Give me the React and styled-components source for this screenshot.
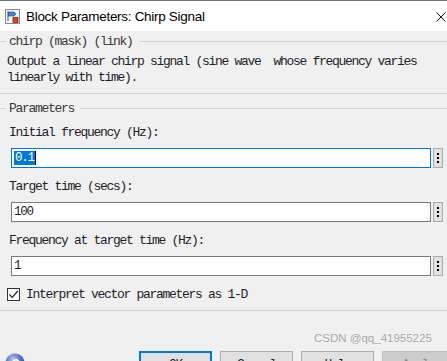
import React from "react";
import styled, { createGlobalStyle } from "styled-components";

const MONO = `"Liberation Mono", "DejaVu Sans Mono", monospace`;
const SANS = `"Liberation Sans", Arial, sans-serif`;

const GlobalStyle = createGlobalStyle`
  html, body {
    margin: 0;
    padding: 0;
    background: #f0f0f0;
    overflow: hidden;
  }
`;

const params = [
  { label: "Initial frequency (Hz):", value: "0.1", focused: true },
  { label: "Target time (secs):", value: "100" },
  { label: "Frequency at target time (Hz):", value: "1" },
];

const buttons = [
  { title: "OK", primary: true },
  { title: "Cancel" },
  { title: "Help" },
  { title: "Apply", disabled: true },
];

const BlockIcon = () => (
  <svg width="15" height="15" viewBox="0 0 15 15">
    <rect x="0.5" y="0.5" width="14" height="14" fill="#f4f4f4" stroke="#8a8a8a" />
    <path d="M3 2.5 V12" stroke="#3a6fb0" strokeWidth="1.2" />
    <path d="M3.5 3 L9 3 L11 5 L9 7 L3.5 7 Z" fill="#4a86d0" stroke="#24508a" strokeWidth="0.7" />
    <rect x="8" y="8.5" width="5" height="5" fill="#e0401c" stroke="#7a1e0a" strokeWidth="0.7" />
  </svg>
);

const CloseIcon = () => (
  <svg width="10" height="10" viewBox="0 0 10 10">
    <path d="M0.5 0.5 L9.5 9.5 M9.5 0.5 L0.5 9.5" stroke="#111" strokeWidth="1" />
  </svg>
);

const HelpGlyph = () => (
  <svg width="22" height="22" viewBox="0 0 22 22">
    <defs>
      <radialGradient id="hg" cx="40%" cy="30%" r="70%">
        <stop offset="0%" stopColor="#b7c9ec" />
        <stop offset="55%" stopColor="#4f72c4" />
        <stop offset="100%" stopColor="#22408e" />
      </radialGradient>
    </defs>
    <circle cx="11" cy="11" r="10.5" fill="#e8e8e8" />
    <circle cx="11" cy="11" r="9.5" fill="url(#hg)" />
    <text x="11" y="16" textAnchor="middle" fontFamily={SANS} fontWeight="bold" fontSize="13" fill="#fff">
      ?
    </text>
  </svg>
);

const App = () => {
  const fieldComponents = params.map((p) => (
    <React.Fragment key={p.label}>
      <FieldLabel>{p.label}</FieldLabel>
      <FieldRow>
        <Field focused={p.focused}>
          {p.focused ? (
            <>
              <Selected>{p.value}</Selected>
              <Caret />
            </>
          ) : (
            p.value
          )}
        </Field>
        <DotsButton>
          <Dot />
          <Dot />
          <Dot />
        </DotsButton>
      </FieldRow>
    </React.Fragment>
  ));

  return (
    <Window>
      <GlobalStyle />
      <TitleBar>
        <IconBox>
          <BlockIcon />
        </IconBox>
        <Title>Block Parameters: Chirp Signal</Title>
        <CloseBox>
          <CloseIcon />
        </CloseBox>
      </TitleBar>
      <Body>
        <Legend top={2}>chirp (mask) (link)</Legend>
        <Description>
          Output a linear chirp signal (sine wave&nbsp; whose frequency varies
          <br />
          linearly with time).
        </Description>
        <Divider top={7} />
        <Legend top={6}>Parameters</Legend>
        {fieldComponents}
        <CheckRow>
          <CheckBox>
            <svg width="11" height="11" viewBox="0 0 11 11">
              <path d="M1.5 5.5 L4.2 8.3 L9.8 2" fill="none" stroke="#222" strokeWidth="1.2" />
            </svg>
          </CheckBox>
          <CheckLabel>Interpret vector parameters as 1-D</CheckLabel>
        </CheckRow>
        <Divider top={8} />
        <ButtonRow>
          <HelpButton>
            <HelpGlyph />
          </HelpButton>
          <Buttons>
            {buttons.map((b) => (
              <DialogButton key={b.title} primary={b.primary} disabled={b.disabled}>
                {b.title}
              </DialogButton>
            ))}
          </Buttons>
        </ButtonRow>
      </Body>
      <Watermark>CSDN @qq_41955225</Watermark>
    </Window>
  );
};

const Window = styled.div`
  position: relative;
  display: flex;
  flex-direction: column;
  width: 447px;
  height: 361px;
  overflow: hidden;
  background: #f0f0f0;
  border-top: 1px solid #6e6e6e;
  box-sizing: border-box;
`;

const TitleBar = styled.div`
  display: flex;
  align-items: center;
  height: 30px;
  background: #ffffff;
  flex-shrink: 0;
`;

const IconBox = styled.div`
  display: flex;
  margin-left: 5px;
  margin-top: 1px;
`;

const Title = styled.div`
  margin-left: 6px;
  font-family: ${SANS};
  font-size: 13.5px;
  letter-spacing: -0.3px;
  color: #000;
`;

const CloseBox = styled.div`
  display: flex;
  margin-left: auto;
  margin-right: 1px;
  margin-top: 1px;
`;

const Body = styled.div`
  display: flex;
  flex-direction: column;
  font-family: ${MONO};
  font-size: 13px;
  letter-spacing: -1.3px;
  color: #1e1e2a;
`;

const Legend = styled.div`
  display: flex;
  align-items: center;
  height: 16px;
  margin-top: ${(p) => p.top}px;
  color: #3a3a3a;
  white-space: nowrap;

  &::before {
    content: "";
    width: 6px;
    height: 1px;
    margin-right: 3px;
    background: #d4d4d4;
  }

  &::after {
    content: "";
    flex: 1;
    height: 1px;
    margin-left: 6px;
    background: #d4d4d4;
  }
`;

const Description = styled.div`
  margin-top: 5px;
  padding-left: 7px;
  line-height: 16px;
  white-space: nowrap;
`;

const Divider = styled.div`
  height: 1px;
  margin-top: ${(p) => p.top}px;
  background: #d4d4d4;
`;

const FieldLabel = styled.div`
  height: 16px;
  line-height: 16px;
  padding-left: 9px;
  margin-top: 9px;
  white-space: nowrap;

  & + div {
    margin-top: 7px;
  }
`;

const FieldRow = styled.div`
  display: flex;
  gap: 2px;
  padding-left: 11px;

  & + ${FieldLabel} {
    margin-top: 11px;
  }
`;

const Field = styled.div`
  display: flex;
  align-items: center;
  width: 420px;
  height: 20px;
  box-sizing: border-box;
  padding-left: 2px;
  background: #ffffff;
  border: 1px solid ${(p) => (p.focused ? "#0078d7" : "#7a7a7a")};
  font-size: 12.5px;
`;

const Selected = styled.span`
  background: #0078d7;
  color: #ffffff;
  padding: 0 1px;
  line-height: 14px;
`;

const Caret = styled.span`
  width: 1px;
  height: 14px;
  background: #000;
`;

const DotsButton = styled.div`
  display: flex;
  flex-direction: column;
  align-items: center;
  justify-content: center;
  gap: 2px;
  width: 10px;
  height: 20px;
  box-sizing: border-box;
  background: #e1e1e1;
  border: 1px solid #adadad;
`;

const Dot = styled.span`
  width: 2px;
  height: 2px;
  background: #000;
`;

const CheckRow = styled.div`
  display: flex;
  align-items: center;
  height: 16px;
  margin-top: 10px;
  padding-left: 7px;
`;

const CheckBox = styled.div`
  display: flex;
  align-items: center;
  justify-content: center;
  width: 13px;
  height: 13px;
  box-sizing: border-box;
  background: #ffffff;
  border: 1px solid #333;
`;

const CheckLabel = styled.span`
  margin-left: 6px;
  white-space: nowrap;
`;

const ButtonRow = styled.div`
  display: flex;
  align-items: flex-start;
  margin-top: 40px;
  padding-left: 4px;
`;

const HelpButton = styled.div`
  display: flex;
  margin-top: 1px;
`;

const Buttons = styled.div`
  display: flex;
  gap: 8px;
  margin-left: 113px;
`;

const DialogButton = styled.div`
  display: flex;
  justify-content: center;
  width: 73px;
  height: 23px;
  box-sizing: border-box;
  padding-top: ${(p) => (p.primary ? 4 : 5)}px;
  background: ${(p) => (p.disabled ? "#cccccc" : "#e1e1e1")};
  border: ${(p) =>
    p.primary ? "2px solid #0078d7" : p.disabled ? "1px solid #bfbfbf" : "1px solid #adadad"};
  color: ${(p) => (p.disabled ? "#8a8a8a" : "#1e1e2a")};
  flex-shrink: 0;
`;

const Watermark = styled.div`
  position: absolute;
  left: 314px;
  top: 331px;
  font-family: ${SANS};
  font-size: 11.5px;
  color: #a5a5a5;
  text-shadow: 0 0 1px #ffffff;
  white-space: nowrap;
`;

export default App;
